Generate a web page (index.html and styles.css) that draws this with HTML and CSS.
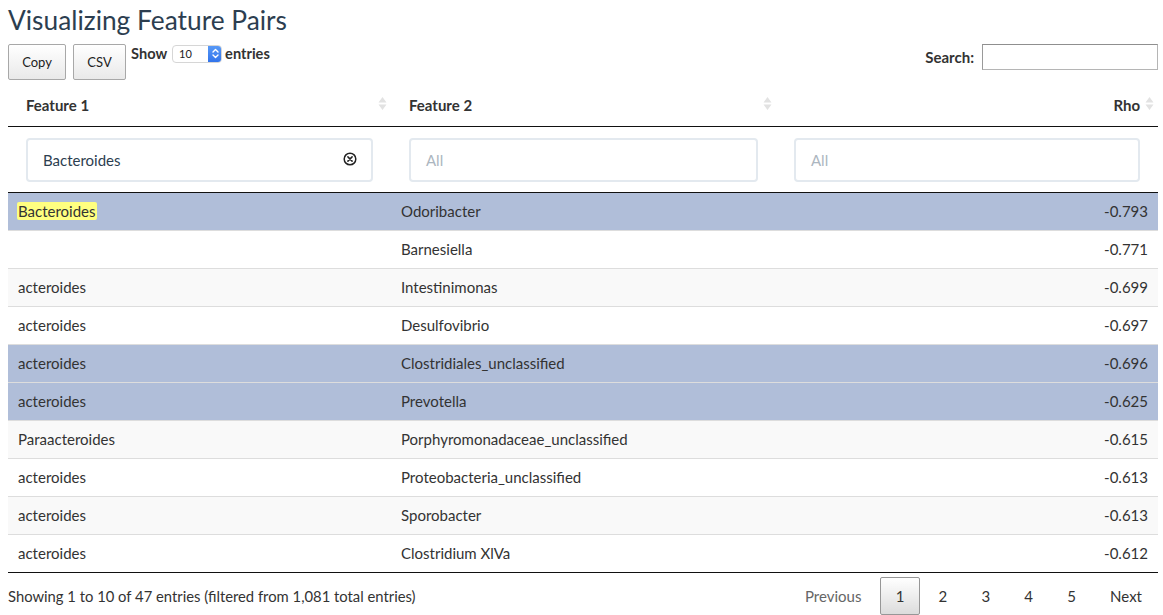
FILE: index.html
```html
<!DOCTYPE html>
<html>
<head>
<meta charset="utf-8">
<link rel="stylesheet" href="styles.css">
</head>
<body>
<div class="page">
  <h1 class="title">Visualizing Feature Pairs</h1>
  <div class="toolbar">
    <div class="tools-left">
      <button class="dt-btn">Copy</button>
      <button class="dt-btn">CSV</button>
      <label class="length">Show
        <span class="select">
          <span class="select-val">10</span>
          <span class="select-arrows"><svg width="11" height="15" viewBox="0 0 11 15"><path d="M3 6 L5.5 3.5 L8 6 M3 9 L5.5 11.5 L8 9" fill="none" stroke="#fff" stroke-width="1.4" stroke-linecap="round" stroke-linejoin="round"/></svg></span>
        </span>
        entries</label>
    </div>
    <label class="search">Search: <span class="search-box"></span></label>
  </div>

  <table class="dt">
    <colgroup><col class="c1"><col class="c2"><col class="c3"></colgroup>
    <thead>
      <tr class="head">
        <th>Feature 1<span class="sort"><svg width="9" height="15" viewBox="0 0 9 15"><path d="M4.5 1 L8.5 6.5 L0.5 6.5 Z M4.5 14 L8.5 8.5 L0.5 8.5 Z" fill="#e2e2e2"/></svg></span></th>
        <th>Feature 2<span class="sort"><svg width="9" height="15" viewBox="0 0 9 15"><path d="M4.5 1 L8.5 6.5 L0.5 6.5 Z M4.5 14 L8.5 8.5 L0.5 8.5 Z" fill="#e2e2e2"/></svg></span></th>
        <th class="num">Rho<span class="sort"><svg width="9" height="15" viewBox="0 0 9 15"><path d="M4.5 1 L8.5 6.5 L0.5 6.5 Z M4.5 14 L8.5 8.5 L0.5 8.5 Z" fill="#e2e2e2"/></svg></span></th>
      </tr>
      <tr class="filters">
        <td><div class="finput filled">Bacteroides<span class="clear"><svg width="14" height="14" viewBox="0 0 14 14"><circle cx="7" cy="7" r="5.8" fill="none" stroke="#222" stroke-width="1.5"/><path d="M4.9 4.9 L9.1 9.1 M9.1 4.9 L4.9 9.1" stroke="#222" stroke-width="1.5" stroke-linecap="round"/></svg></span></div></td>
        <td><div class="finput">All</div></td>
        <td><div class="finput">All</div></td>
      </tr>
    </thead>
    <tbody>
      <tr class="odd sel"><td><mark>Bacteroides</mark></td><td>Odoribacter</td><td class="num">-0.793</td></tr>
      <tr class="even"><td></td><td>Barnesiella</td><td class="num">-0.771</td></tr>
      <tr class="odd"><td>acteroides</td><td>Intestinimonas</td><td class="num">-0.699</td></tr>
      <tr class="even"><td>acteroides</td><td>Desulfovibrio</td><td class="num">-0.697</td></tr>
      <tr class="odd sel"><td>acteroides</td><td>Clostridiales_unclassified</td><td class="num">-0.696</td></tr>
      <tr class="even sel"><td>acteroides</td><td>Prevotella</td><td class="num">-0.625</td></tr>
      <tr class="odd"><td>Paraacteroides</td><td>Porphyromonadaceae_unclassified</td><td class="num">-0.615</td></tr>
      <tr class="even"><td>acteroides</td><td>Proteobacteria_unclassified</td><td class="num">-0.613</td></tr>
      <tr class="odd"><td>acteroides</td><td>Sporobacter</td><td class="num">-0.613</td></tr>
      <tr class="even"><td>acteroides</td><td>Clostridium XlVa</td><td class="num">-0.612</td></tr>
    </tbody>
  </table>

  <div class="footer">
    <div class="info">Showing 1 to 10 of 47 entries (filtered from 1,081 total entries)</div>
    <div class="pager">
      <span class="pg disabled">Previous</span>
      <span class="pg current">1</span>
      <span class="pg">2</span>
      <span class="pg">3</span>
      <span class="pg">4</span>
      <span class="pg">5</span>
      <span class="pg">Next</span>
    </div>
  </div>
</div>
</body>
</html>
```

FILE: styles.css
```css
* { box-sizing: border-box; }
html, body { margin: 0; padding: 0; background: #fff; }
body {
  font-family: Lato, "Noto Sans", sans-serif;
  font-size: 15px;
  color: #333;
}
.page {
  width: 1150px;
  margin-left: 8px;
}
.title {
  margin: 0;
  padding-top: 4px;
  font-size: 26.3px;
  font-weight: 400;
  line-height: 32px;
  color: #2c3e50;
}
.toolbar {
  display: flex;
  justify-content: space-between;
  align-items: flex-start;
  margin-top: 8px;
  height: 36px;
}
.tools-left {
  display: flex;
  align-items: flex-start;
}
.dt-btn {
  height: 36px;
  padding: 0 10px;
  margin-right: 7px;
  font-family: Lato, "Noto Sans", sans-serif;
  font-size: 13px;
  color: #222;
  border: 1px solid #a8a8a8;
  border-radius: 2px;
  background: linear-gradient(to bottom, #ffffff 0%, #e9e9e9 100%);
}
.dt-btn:first-child { width: 58px; }
.dt-btn:nth-child(2) { width: 53px; margin-right: 5px; }
.length {
  display: flex;
  align-items: center;
  gap: 3px;
  font-weight: 700;
  font-size: 14.6px;
  color: #333;
  margin-top: 1px;
  line-height: 18px;
}
.select {
  display: inline-flex;
  align-items: center;
  width: 50px;
  height: 18px;
  margin-left: 2px;
  border: 1px solid #d6d6d6;
  border-radius: 4px;
  background: #fff;
  overflow: hidden;
}
.select-val {
  flex: 1;
  font-weight: 400;
  font-size: 11px;
  padding-left: 6px;
  color: #222;
}
.select-arrows {
  width: 14px;
  height: 18px;
  margin-top: -1px;
  margin-right: -1px;
  background: linear-gradient(to bottom, #5a9bf7, #2f72ea);
  border-radius: 0 4px 4px 0;
  display: flex;
  align-items: center;
  justify-content: center;
}
.search {
  display: flex;
  align-items: center;
  gap: 8px;
  font-weight: 700;
  font-size: 15px;
  color: #333;
}
.search-box {
  display: block;
  width: 176px;
  height: 26px;
  border: 1px solid #b5b5b5;
  border-top-color: #8f8f8f;
  border-left-color: #9a9a9a;
  background: #fff;
}

.dt {
  width: 1150px;
  table-layout: fixed;
  border-collapse: collapse;
  margin-top: 5px;
}
.c1 { width: 383px; }
.c2 { width: 385px; }
.c3 { width: 382px; }
.head th {
  position: relative;
  text-align: left;
  font-weight: 700;
  font-size: 15px;
  color: #333;
  padding: 9px 18px 10px 18px;
  line-height: 22px;
  border-bottom: 1px solid #111;
}
.head th.num { text-align: right; }
.sort {
  position: absolute;
  right: 4px;
  top: 11px;
  line-height: 0;
}
.filters td {
  padding: 11px 18px 10px 18px;
  border-bottom: 1px solid #111;
}
.finput {
  position: relative;
  height: 44px;
  border: 2px solid #e3e9ef;
  border-radius: 4px;
  padding: 0 15px;
  display: flex;
  align-items: center;
  font-size: 15px;
  color: #acb6c0;
  background: #fff;
}
.finput.filled { color: #2c3e50; }
.clear {
  position: absolute;
  right: 14px;
  top: 12px;
  line-height: 0;
}
tbody td {
  padding: 8px 10px;
  line-height: 21px;
  height: 38px;
  font-size: 15px;
  color: #333;
  border-top: 1px solid #ddd;
  white-space: nowrap;
}
tbody tr:first-child td { border-top: none; height: 37px; }
tbody tr:last-child td { border-bottom: 1px solid #111; }
tbody td.num { text-align: right; }
tr.odd td { background: #f9f9f9; }
tr.even td { background: #fff; }
tr.sel td { background: #b0bed9; }
mark {
  background: #ffff80;
  color: #333;
  border-radius: 2px;
  padding: 0 1px;
  margin-left: -1px;
}
.footer {
  display: flex;
  justify-content: space-between;
  align-items: flex-start;
  padding-top: 4px;
}
.info {
  font-size: 14.8px;
  color: #333;
  padding-top: 10px;
}
.pager {
  display: flex;
  align-items: center;
}
.pg {
  display: inline-block;
  height: 38px;
  line-height: 36px;
  padding: 0 15px;
  margin-left: 2.2px;
  text-align: center;
  font-size: 15px;
  color: #333;
  border: 1px solid transparent;
  border-radius: 2px;
}
.pg.disabled { color: #666; }
.pg.current {
  border-color: #979797;
  background: linear-gradient(to bottom, #ffffff 0%, #dcdcdc 100%);
}
```
